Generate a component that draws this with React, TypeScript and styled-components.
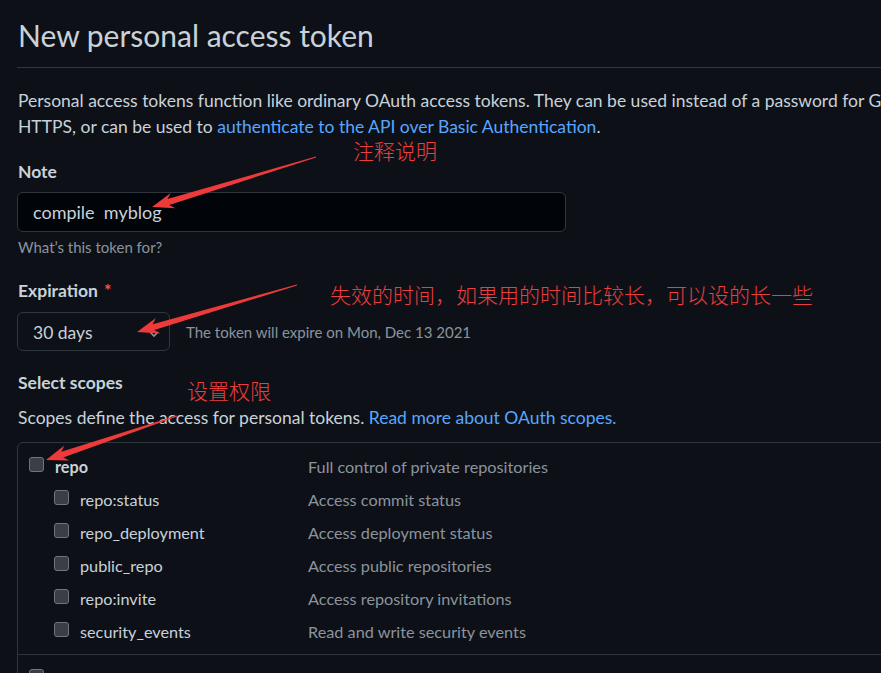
import React from "react";
import styled, { createGlobalStyle } from "styled-components";

const Global = createGlobalStyle`
  html, body { margin: 0; padding: 0; background: #0d1117; overflow: hidden; }
  body { font-family: Lato, "Noto Sans", sans-serif; color: #c9d1d9; }
  * { box-sizing: border-box; }
`;

const Page = styled.div`
  position: relative;
  width: 1200px;
  min-height: 673px;
  padding-left: 17px;
  display: flex;
  flex-direction: column;
  align-items: flex-start;
  & > * { flex-shrink: 0; }
`;

const Header = styled.div`
  align-self: stretch;
  padding: 17px 0 14px 1px;
  border-bottom: 1px solid #30363d;
`;

const Title = styled.h1`
  margin: 0;
  font-size: 30px;
  line-height: 36px;
  font-weight: 400;
  color: #c9d1d9;
`;

const Para = styled.p<{ $mt: number }>`
  margin: ${(p) => p.$mt}px 0 0 1px;
  font-size: 17.5px;
  line-height: 26px;
  white-space: nowrap;
`;

const Link = styled.a`
  color: #58a6ff;
  text-decoration: none;
`;

const Label = styled.div<{ $mt: number }>`
  margin: ${(p) => p.$mt}px 0 0 1px;
  font-size: 17.5px;
  line-height: 26px;
  font-weight: 700;
  color: #c9d1d9;
`;

const Required = styled.span`
  color: #f85149;
  margin-left: 6px;
`;

const TextInput = styled.div`
  margin-top: 7px;
  width: 549px;
  height: 40px;
  padding-left: 15px;
  padding-bottom: 1px;
  display: flex;
  align-items: center;
  background: #010409;
  border: 1px solid #30363d;
  border-radius: 6px;
  font-size: 18px;
  color: #c9d1d9;
  white-space: pre;
`;

const Hint = styled.div<{ $mt: number }>`
  margin: ${(p) => p.$mt}px 0 0 1px;
  font-size: 15px;
  line-height: 22px;
  color: #8b949e;
  white-space: nowrap;
`;

const SelectRow = styled.div`
  margin-top: 8px;
  display: flex;
  align-items: center;
  gap: 15px;
`;

const Select = styled.div`
  position: relative;
  width: 153px;
  height: 39px;
  padding-left: 15px;
  padding-top: 2px;
  display: flex;
  align-items: center;
  border: 1px solid #30363d;
  border-radius: 6px;
  background: #0d1117;
  font-size: 17.5px;
  color: #c9d1d9;
`;

const Caret = styled.svg`
  position: absolute;
  right: 10px;
  top: 50%;
  margin-top: -2px;
`;

const ScopeBox = styled.div`
  margin-top: 11px;
  align-self: stretch;
  border: 1px solid #30363d;
  border-radius: 6px;
`;

const Group = styled.div<{ $first?: boolean }>`
  padding: 7px 0 6px;
  border-top: ${(p) => (p.$first ? "none" : "1px solid #30363d")};
`;

const Row = styled.div`
  display: grid;
  grid-template-columns: 290px 1fr;
  height: 33px;
  font-size: 16.25px;
  line-height: 33px;
`;

const NameCell = styled.div<{ $sub?: boolean }>`
  display: flex;
  align-items: flex-start;
  padding-left: ${(p) => (p.$sub ? 36 : 11)}px;
  color: #c9d1d9;
  font-weight: ${(p) => (p.$sub ? 400 : 700)};
  white-space: nowrap;
`;

const Check = styled.span`
  flex: 0 0 auto;
  width: 15px;
  height: 15px;
  margin-top: 7px;
  margin-right: 11px;
  background: #3b3e44;
  border: 1px solid #70757c;
  border-radius: 3px;
`;

const Desc = styled.div`
  color: #8b949e;
  white-space: nowrap;
`;

const Annotations = styled.div`
  position: absolute;
  inset: 0;
  pointer-events: none;
`;

const Note = styled.div<{ $x: number; $y: number }>`
  position: absolute;
  left: ${(p) => p.$x}px;
  top: ${(p) => p.$y}px;
  font-family: "Noto Sans CJK SC", sans-serif;
  font-size: 21px;
  line-height: 21px;
  font-weight: 300;
  color: #ee3d3d;
  white-space: nowrap;
`;

const ArrowLayer = styled.svg`
  position: absolute;
  left: 0;
  top: 0;
`;

function arrowPoints(x1: number, y1: number, x2: number, y2: number) {
  const dx = x2 - x1;
  const dy = y2 - y1;
  const len = Math.hypot(dx, dy);
  const ux = dx / len;
  const uy = dy / len;
  const nx = -uy;
  const ny = ux;
  const L = 22;
  const W = 8;
  const w = 3;
  const notchX = x2 - ux * L * 0.78;
  const notchY = y2 - uy * L * 0.78;
  const wingX = x2 - ux * L;
  const wingY = y2 - uy * L;
  const pts = [
    [x1 + nx * 0.5, y1 + ny * 0.5],
    [notchX + nx * w, notchY + ny * w],
    [wingX + nx * W, wingY + ny * W],
    [x2, y2],
    [wingX - nx * W, wingY - ny * W],
    [notchX - nx * w, notchY - ny * w],
    [x1 - nx * 0.5, y1 - ny * 0.5],
  ];
  return pts.map((p) => p.map((v) => v.toFixed(1)).join(",")).join(" ");
}

const subScopes = [
  ["repo:status", "Access commit status"],
  ["repo_deployment", "Access deployment status"],
  ["public_repo", "Access public repositories"],
  ["repo:invite", "Access repository invitations"],
  ["security_events", "Read and write security events"],
];

export default function App() {
  return (
    <>
      <Global />
      <Page>
        <Header>
          <Title>New personal access token</Title>
        </Header>
        <Para $mt={20}>
          Personal access tokens function like ordinary OAuth access tokens. They can be used instead of a password for Git over
          <br />
          HTTPS, or can be used to <Link>authenticate to the API over Basic Authentication</Link>.
        </Para>
        <Label $mt={19}>Note</Label>
        <TextInput>compile  myblog</TextInput>
        <Hint $mt={4}>What’s this token for?</Hint>
        <Label $mt={20}>
          Expiration<Required>*</Required>
        </Label>
        <SelectRow>
          <Select>
            30 days
            <Caret width="10" height="8" viewBox="0 0 10 8">
              <path d="M1 2 L5 6 L9 2" fill="none" stroke="#8b949e" strokeWidth="1.6" />
            </Caret>
          </Select>
          <Hint $mt={0}>The token will expire on Mon, Dec 13 2021</Hint>
        </SelectRow>
        <Label $mt={19}>Select scopes</Label>
        <Para $mt={9}>
          Scopes define the access for personal tokens. <Link>Read more about OAuth scopes.</Link>
        </Para>
        <ScopeBox>
          <Group $first>
            <Row>
              <NameCell>
                <Check />
                repo
              </NameCell>
              <Desc>Full control of private repositories</Desc>
            </Row>
            {subScopes.map(([name, desc]) => (
              <Row key={name}>
                <NameCell $sub>
                  <Check />
                  {name}
                </NameCell>
                <Desc>{desc}</Desc>
              </Row>
            ))}
          </Group>
          <Group>
            <Row>
              <NameCell>
                <Check />
              </NameCell>
            </Row>
          </Group>
        </ScopeBox>
        <Annotations>
          <Note $x={353} $y={140}>注释说明</Note>
          <Note $x={330} $y={284}>失效的时间，如果用的时间比较长，可以设的长一些</Note>
          <Note $x={187} $y={380}>设置权限</Note>
          <ArrowLayer width="881" height="673" viewBox="0 0 881 673">
            <polygon points={arrowPoints(316, 157, 152, 207)} fill="#ee3a3a" />
            <polygon points={arrowPoints(297, 285, 137, 332)} fill="#ee3a3a" />
            <polygon points={arrowPoints(177, 416, 46, 460)} fill="#ee3a3a" />
          </ArrowLayer>
        </Annotations>
      </Page>
    </>
  );
}
